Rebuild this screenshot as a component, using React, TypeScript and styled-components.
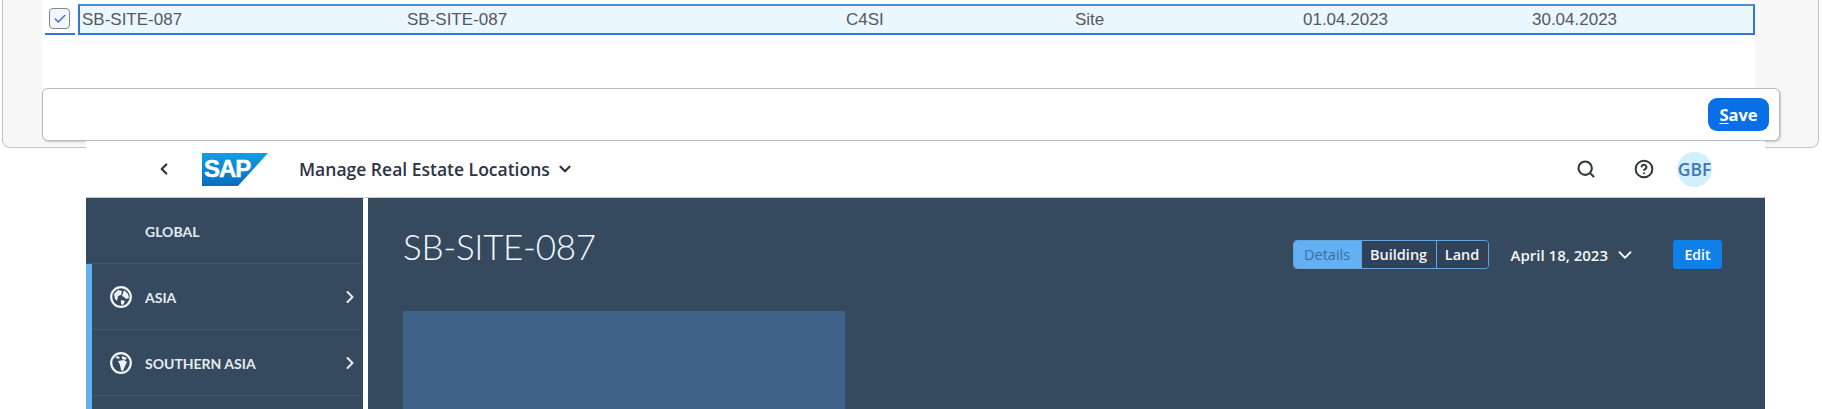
import styled, { createGlobalStyle } from "styled-components";
import { ChevronDown, ChevronLeft, ChevronRight, Search, CircleHelp, Check } from "lucide-react";

const GlobalStyle = createGlobalStyle`
    html, body {
        margin: 0;
        background: #fff;
        overflow: hidden;
    }
`;

const Page = styled.div`
    width: 1822px;
    height: 409px;
    overflow: hidden;
`;

// the dialog lying behind the app
const Dialog = styled.div`
    box-sizing: border-box;
    height: 148px;
    margin: 0 3px 0 2px;
    padding-left: 39px;
    background: #f7f7f7;
    border: 1px solid #c4c4c4;
    border-top: 0;
    border-radius: 0 0 8px 8px;
`;
const Table = styled.div`
    box-sizing: border-box;
    width: 1713px;
    height: 88px;
    padding: 4px 0 0 3px;
    background: #fff;
    display: flex;
    align-items: flex-start;
`;
const SelectCell = styled.div`
    box-sizing: border-box;
    width: 30px;
    height: 31px;
    margin-right: 3px;
    padding-top: 4px;
    display: flex;
    justify-content: center;
    border-bottom: 2px solid #2f78d8;
`;
const CheckBox = styled.div`
    box-sizing: border-box;
    width: 21px;
    height: 21px;
    display: flex;
    align-items: center;
    justify-content: center;
    background: #f3f6fb;
    border: 1.5px solid #7d8894;
    border-radius: 4px;
    color: #3f6fc4;
`;
const Row = styled.div`
    box-sizing: border-box;
    width: 1679px;
    height: 31px;
    display: grid;
    grid-template-columns: 325px 439px 229px 228px 229px 1fr;
    align-items: center;
    padding: 1px 0 0 2px;
    background: #ebf7fe;
    border: 2px solid #2f78d8;
    border-bottom-width: 2.5px;
    border-top-color: #4a8ed8;
    font-family: "Liberation Sans", Arial, sans-serif;
    font-size: 17px;
    color: #55595e;
`;
const Cell = styled.span`
    white-space: nowrap;
`;
const Footer = styled.div`
    box-sizing: border-box;
    width: 1738px;
    height: 53px;
    padding-right: 10px;
    display: flex;
    align-items: center;
    justify-content: flex-end;
    background: #fff;
    border: 1.5px solid #b4bac0;
    border-radius: 6px;
    box-shadow: 1px 1px 2px #c8c8c8;
`;
const SaveButton = styled.button`
    width: 61px;
    height: 33px;
    padding: 0;
    background: #0a6fe6;
    color: #fff;
    border: 0;
    border-radius: 9px;
    font-family: "Open Sans", sans-serif;
    font-size: 16.5px;
    font-weight: 700;
    u {
        text-underline-offset: 2px;
    }
`;

// the app lies over the lower edge of the dialog
const AppFrame = styled.div`
    position: relative;
    box-sizing: border-box;
    width: 1679px;
    height: 268px;
    margin: -7px 0 0 86px;
    display: flex;
    flex-direction: column;
    background: #fff;
`;
const ShellBar = styled.header`
    box-sizing: border-box;
    height: 57px;
    flex-shrink: 0;
    padding: 0 53px 0 69px;
    display: flex;
    align-items: center;
    color: #32363a;
    border-bottom: 1px solid #c8ccd0;
`;
const Logo = styled.svg`
    width: 66px;
    height: 33px;
    margin: 0 31px 0 29px;
`;
const AppTitle = styled.div`
    display: flex;
    align-items: center;
    gap: 6px;
    font-family: "Open Sans", sans-serif;
    font-size: 17.5px;
    font-weight: 600;
    color: #2c3446;
`;
const ShellActions = styled.div`
    margin-left: auto;
    display: flex;
    align-items: center;
`;
const Avatar = styled.div`
    width: 35px;
    height: 35px;
    margin-left: 23px;
    display: flex;
    align-items: center;
    justify-content: center;
    border-radius: 50%;
    background: #d1effc;
    color: #3d78b8;
    font-family: "Open Sans", sans-serif;
    font-size: 17.5px;
    font-weight: 600;
    overflow: hidden;
`;
const HelpIcon = styled.span`
    display: flex;
    margin-left: 38px;
`;
const Body = styled.div`
    flex: 1;
    min-height: 0;
    display: flex;
    gap: 5px;
`;
const Sidebar = styled.nav`
    width: 277px;
    flex-shrink: 0;
    background: #354a5f;
    font-family: Lato, sans-serif;
    font-size: 14px;
    font-weight: 700;
    color: #e6eaee;
`;
const NavRow = styled.div<{ $active?: boolean; $top?: boolean }>`
    box-sizing: border-box;
    height: 66px;
    padding: ${(p) => (p.$top ? "0 3px 0 59px" : "0 3px 0 18px")};
    display: flex;
    align-items: center;
    gap: 13px;
    border-left: ${(p) => (p.$active ? "6px solid #64b0ee" : "0")};
    box-shadow: inset 0 -1px 0 #3f566c;
`;
const NavLabel = styled.span`
    flex: 1;
`;
const Main = styled.main`
    flex: 1;
    padding: 28px 43px 0 35px;
    background: #354a5f;
    color: #fff;
`;
const MainHead = styled.div`
    display: flex;
    align-items: flex-start;
`;
const PageTitle = styled.h1`
    margin: 0;
    font-family: Lato, sans-serif;
    font-size: 35px;
    line-height: 40px;
    letter-spacing: -0.3px;
    font-weight: 300;
    color: #f4f7fa;
`;
const HeadControls = styled.div`
    margin-left: auto;
    margin-top: 14px;
    display: flex;
    align-items: center;
    font-family: "Open Sans", sans-serif;
    font-size: 14.5px;
    font-weight: 600;
`;
const Segments = styled.div`
    display: flex;
    height: 29px;
    box-sizing: border-box;
    border: 1px solid #64a4dc;
    border-radius: 4px;
    overflow: hidden;
`;
const Segment = styled.div<{ $on?: boolean; $w: number }>`
    width: ${(p) => p.$w}px;
    display: flex;
    align-items: center;
    justify-content: center;
    background: ${(p) => (p.$on ? "#64b0f4" : "#2f4257")};
    color: ${(p) => (p.$on ? "#3f6e9e" : "#f0f4f8")};
    border-left: ${(p) => (p.$on ? "0" : "1px solid #64a4dc")};
    font-weight: ${(p) => (p.$on ? 400 : 600)};
`;
const DatePick = styled.div`
    margin: 0 37px 0 22px;
    display: flex;
    align-items: center;
    gap: 6px;
    font-size: 15px;
    white-space: nowrap;
    color: #f4f6f8;
`;
const EditButton = styled.button`
    width: 49px;
    height: 29px;
    padding: 0;
    border: 0;
    border-radius: 3px;
    background: #0f80e8;
    color: #fff;
    font-family: "Open Sans", sans-serif;
    font-size: 14px;
    font-weight: 600;
`;
const Tile = styled.div`
    width: 442px;
    height: 100px;
    margin-top: 42px;
    background: #3f6389;
`;

function Globe({ south }: { south?: boolean }) {
    return (
        <svg width="22" height="22" viewBox="0 0 22 22" style={{ flexShrink: 0 }}>
            <circle cx="11" cy="11" r="9.8" fill="none" stroke="#f2f4f6" strokeWidth="2.2" />
            {south ? (
                <path d="M5 5l3-1 2 2-2 1zM12 4l5 2-2 2-3-1zM8 9l6-1 3 2-2 4-2 5-2-1-1-5z" fill="#f2f4f6" />
            ) : (
                <path d="M4 8l4-4 4 1-1 4-3 1-1 5-2-2zM14 4l4 4 1 4-3 1-2-2-2-1 1-3zM11 14l4 1-2 4-2-1z" fill="#f2f4f6" />
            )}
        </svg>
    );
}

export default function App() {
    return (
        <Page>
            <GlobalStyle />
            <Dialog>
                <Table>
                    <SelectCell>
                        <CheckBox>
                            <Check size={14} strokeWidth={2.5} />
                        </CheckBox>
                    </SelectCell>
                    <Row>
                        <Cell>SB-SITE-087</Cell>
                        <Cell>SB-SITE-087</Cell>
                        <Cell>C4SI</Cell>
                        <Cell>Site</Cell>
                        <Cell>01.04.2023</Cell>
                        <Cell>30.04.2023</Cell>
                    </Row>
                </Table>
                <Footer>
                    <SaveButton>
                        <u>S</u>ave
                    </SaveButton>
                </Footer>
            </Dialog>
            <AppFrame>
                <ShellBar>
                    <ChevronLeft size={18} strokeWidth={3} />
                    <Logo viewBox="0 0 66 33">
                        <defs>
                            <linearGradient id="sapBlue" x1="0" y1="0" x2="0" y2="1">
                                <stop offset="0" stopColor="#129fe2" />
                                <stop offset="1" stopColor="#0a6cbc" />
                            </linearGradient>
                        </defs>
                        <polygon points="0,0 66,0 36,33 0,33" fill="url(#sapBlue)" />
                        <text x="2" y="24" fontFamily="Liberation Sans, sans-serif" fontSize="24" fontWeight="700" letterSpacing="-1" fill="#fff" stroke="#fff" strokeWidth="0.5">
                            SAP
                        </text>
                    </Logo>
                    <AppTitle>
                        Manage Real Estate Locations
                        <ChevronDown size={18} strokeWidth={3} />
                    </AppTitle>
                    <ShellActions>
                        <Search size={20} strokeWidth={2.5} />
                        <HelpIcon>
                            <CircleHelp size={20} strokeWidth={2.4} />
                        </HelpIcon>
                        <Avatar>GBF</Avatar>
                    </ShellActions>
                </ShellBar>
                <Body>
                    <Sidebar>
                        <NavRow $top>
                            <NavLabel>GLOBAL</NavLabel>
                        </NavRow>
                        <NavRow $active>
                            <Globe />
                            <NavLabel>ASIA</NavLabel>
                            <ChevronRight size={20} strokeWidth={2.5} />
                        </NavRow>
                        <NavRow $active>
                            <Globe south />
                            <NavLabel>SOUTHERN ASIA</NavLabel>
                            <ChevronRight size={20} strokeWidth={2.5} />
                        </NavRow>
                        <NavRow $active />
                    </Sidebar>
                    <Main>
                        <MainHead>
                            <PageTitle>SB-SITE-087</PageTitle>
                            <HeadControls>
                                <Segments>
                                    <Segment $on $w={67}>Details</Segment>
                                    <Segment $w={74}>Building</Segment>
                                    <Segment $w={51}>Land</Segment>
                                </Segments>
                                <DatePick>
                                    April 18, 2023
                                    <ChevronDown size={22} strokeWidth={2} />
                                </DatePick>
                                <EditButton>Edit</EditButton>
                            </HeadControls>
                        </MainHead>
                        <Tile />
                    </Main>
                </Body>
            </AppFrame>
        </Page>
    );
}
